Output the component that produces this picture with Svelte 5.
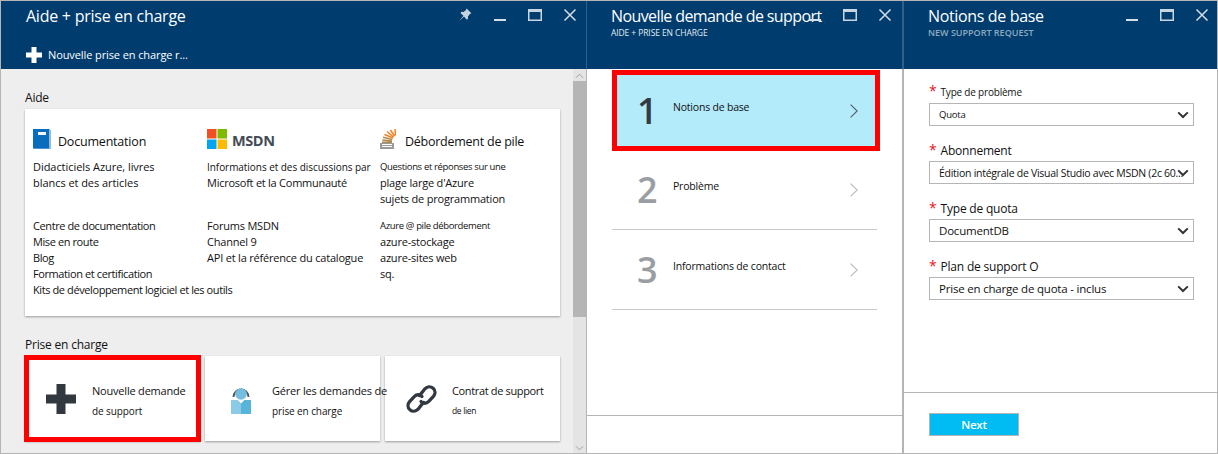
<script>
    const docLinks = ['Centre de documentation', 'Mise en route', 'Blog', 'Formation et certification', 'Kits de développement logiciel et les outils'];
    const msdnLinks = ['Forums MSDN', 'Channel 9', 'API et la référence du catalogue'];
    const soLinks = ['azure-stockage', 'azure-sites web', 'sq.'];
    const steps = [
        { n: 1, label: 'Notions de base', active: true },
        { n: 2, label: 'Problème' },
        { n: 3, label: 'Informations de contact' }
    ];
    const fields = [
        { label: 'Type de problème', value: 'Quota', small: true },
        { label: 'Abonnement', value: 'Édition intégrale de Visual Studio avec MSDN (2c 60...', tiny: true },
        { label: 'Type de quota', value: 'DocumentDB' },
        { label: 'Plan de support O', value: 'Prise en charge de quota - inclus' }
    ];
</script>

{#snippet controls(pin)}
    <div class="controls">
        {#if pin}
            <svg class="ctl pin" viewBox="0 0 14 14"><path d="M8.6 0.6 13.4 5.2 11.9 5.9 9.9 8.6 10 11 8.6 11.4 6 8.6 1.2 13 5.4 7.8 2.7 5.2 3.2 3.8 5.6 3.9 8 2 Z" fill="#c3d2de"/></svg>
        {/if}
        <svg class="ctl" viewBox="0 0 14 14"><rect x="1" y="11" width="12" height="2" fill="#d5dfe7"/></svg>
        <svg class="ctl" viewBox="0 0 14 14"><path d="M0 1H14V13H0ZM1.5 4V11.5H12.5V4Z" fill="#c9d6e0" fill-rule="evenodd"/></svg>
        <svg class="ctl" viewBox="0 0 14 14"><path d="M1.5 1.5 12.5 12.5M12.5 1.5 1.5 12.5" stroke="#d5dfe7" stroke-width="1.5" fill="none"/></svg>
    </div>
{/snippet}

{#snippet chevron()}
    <svg class="chev" viewBox="0 0 12 8"><path d="M1.2 1.4 6 6 10.8 1.4" fill="none" stroke="#333" stroke-width="2"/></svg>
{/snippet}

<div class="page">
    <section class="blade first">
        <header class="head">
            <div class="top">
                <h1 class="aide-title">Aide + prise en charge</h1>
                {@render controls(true)}
            </div>
            <div class="command">
                <svg class="cmd-plus" viewBox="0 0 16 16"><path d="M5.500 0H10.500V5.500H16V10.500H10.500V16H5.500V10.500H0V5.500H5.500Z" fill="#fff"/></svg>
                <span>Nouvelle prise en charge r...</span>
            </div>
        </header>
        <div class="scroller">
            <div class="content">
                <h2 class="aide">Aide</h2>
                <div class="help-card">
                    <div class="col">
                        <div class="col-head">
                            <svg class="ico" viewBox="0 0 18 20"><path d="M0 0H17V1H18V20H2L0 19Z" fill="#8fbce0"/><rect x="0" y="0" width="16" height="19.500" fill="#0a6cbd"/><rect x="5" y="3" width="8" height="3" fill="#fff" opacity=".95"/></svg>
                            <span class="doc-title">Documentation</span>
                        </div>
                        <div class="desc"><p>Didacticiels Azure, livres</p><p>blancs et des articles</p></div>
                        <div class="links tight">{#each docLinks as l}<p>{l}</p>{/each}</div>
                    </div>
                    <div class="col">
                        <div class="col-head">
                            <svg class="ico ms" viewBox="0 0 20 20"><rect width="9.500" height="9.500" fill="#f25022"/><rect x="10.500" width="9.500" height="9.500" fill="#7fba00"/><rect y="10.500" width="9.500" height="9.500" fill="#00a4ef"/><rect x="10.500" y="10.500" width="9.500" height="9.500" fill="#ffb900"/></svg>
                            <span class="msdn">MSDN</span>
                        </div>
                        <div class="desc"><p class="sm">Informations et des discussions par</p><p class="ms-line">Microsoft et la Communauté</p></div>
                        <div class="links">{#each msdnLinks as l}<p>{l}</p>{/each}</div>
                    </div>
                    <div class="col so-col">
                        <div class="col-head so-head">
                            <svg class="ico so" viewBox="0 0 16 20"><path d="M0 14V20H14V14Z" fill="#9a9a9a"/><path d="M2 15.500H12M2 17.500H12" stroke="#fff" stroke-width="1"/><path d="M2 13.300 12 13.300M2.300 11 12 12M3 8.300 12.300 10.500" stroke="#b08a50" stroke-width="1.500"/><path d="M4.500 5.500 13 9M7 2.500 13.500 8M10.500 1 14.500 7M15 0 15.500 6.500" stroke="#f48024" stroke-width="1.500"/></svg>
                            <span class="doc-title so-title">Débordement de pile</span>
                        </div>
                        <div class="desc"><p class="xs">Questions et réponses sur une</p><p>plage large d'Azure</p><p>sujets de programmation</p></div>
                        <div class="links"><p class="xs">Azure @ pile débordement</p>{#each soLinks as l}<p>{l}</p>{/each}</div>
                    </div>
                </div>
                <h2 class="prise">Prise en charge</h2>
                <div class="tiles">
                    <div class="tile marked">
                        <svg class="tile-plus" viewBox="0 0 30 30"><path d="M10.500 0H19.500V10.500H30V19.500H19.500V30H10.500V19.500H0V10.500H10.500Z" fill="#32383f"/></svg>
                        <div class="tile-text"><p>Nouvelle demande</p><p class="xs">de support</p></div>
                    </div>
                    <div class="tile person">
                        <svg class="tile-ico" viewBox="0 0 20 30"><path d="M2.500 13A7.500 7.500 0 1 1 17.500 13" fill="none" stroke="#555" stroke-width="1.800"/><circle cx="10" cy="10" r="5.800" fill="#74bfe0"/><path d="M0 16H6.500L10 19.500 13.500 16H20V30H0Z" fill="#59b4d9"/><path d="M0 16H6.500L10 19.500V30H0Z" fill="#8ccbe6"/></svg>
                        <div class="tile-text"><p>Gérer les demandes de</p><p class="xs">prise en charge</p></div>
                    </div>
                    <div class="tile">
                        <svg class="tile-ico link" viewBox="0 0 32 30"><g fill="none" stroke="#32383f" stroke-width="3.400" stroke-linecap="round"><path d="M14 11.500 19.500 4.500C22 2 25.500 1.800 28 4 30.500 6.300 30.500 9.800 28.300 12.300L23.500 17.500C21 20 17.500 20 15.500 17.500"/><path d="M18 18.500 12.500 25.500C10 28 6.500 28.200 4 26 1.500 23.700 1.500 20.200 3.700 17.700L8.500 12.500C11 10 14.500 10 16.500 12.500"/></g></svg>
                        <div class="tile-text contrat"><p>Contrat de support</p><p class="lien">de lien</p></div>
                    </div>
                </div>
            </div>
            <div class="scrollbar">
                <svg class="arrow" viewBox="0 0 10 6"><path d="M1 5 5 1 9 5" fill="none" stroke="#9a9a9a"/></svg>
                <div class="thumb"></div>
                <svg class="arrow down" viewBox="0 0 10 6"><path d="M1 1 5 5 9 1" fill="none" stroke="#9a9a9a"/></svg>
            </div>
        </div>
    </section>

    <section class="blade second">
        <header class="head">
            <div class="top tight">
                <div class="titles">
                    <h1 class="demande">Nouvelle demande de support</h1>
                    <div class="sub">AIDE + PRISE EN CHARGE</div>
                </div>
                {@render controls(false)}
            </div>
        </header>
        <div class="steps">
            {#each steps as s}
                <div class="step" class:active={s.active}>
                    <span class="num">{s.n}</span>
                    <span class="step-label">{s.label}</span>
                    <svg class="step-arrow" viewBox="0 0 8 14"><path d="M0.600 0.600 7.200 7 0.600 13.400" fill="none" stroke="currentColor" stroke-width="1.100"/></svg>
                </div>
            {/each}
        </div>
        <div class="blade-foot"></div>
    </section>

    <section class="blade third">
        <header class="head">
            <div class="top tight">
                <div class="titles">
                    <h1 class="base">Notions de base</h1>
                    <div class="sub muted">NEW SUPPORT REQUEST</div>
                </div>
                {@render controls(false)}
            </div>
        </header>
        <div class="form">
            {#each fields as f}
                <div class="field">
                    <div class="label" class:small={f.small}><span class="star">*</span>{f.label}</div>
                    <div class="select" class:small={f.small} class:tiny={f.tiny}>
                        <span class="val">{f.value}</span>
                        {@render chevron()}
                    </div>
                </div>
            {/each}
        </div>
        <div class="footer"><div class="next">Next</div></div>
    </section>
</div>

<style>
    :global(body) {
        margin: 0;
        background: #fff;
    }

    p, h1, h2 {
        margin: 0;
        font-weight: 400;
    }

    .page {
        width: 1218px;
        height: 454px;
        box-sizing: border-box;
        display: flex;
        border: 1px solid #b5b5b5;
        font-family: "Open Sans", "Noto Sans", sans-serif;
        font-size: 11px;
        letter-spacing: -0.2px;
        color: #111;
        overflow: hidden;
    }

    .blade {
        display: flex;
        flex-direction: column;
        flex: none;
        box-sizing: border-box;
    }

    .first { width: 585px; }
    .second { width: 316px; border-left: 1px solid #b5b5b5; }
    .third { width: 315px; border-left: 2px solid #b5b5b5; }

    .head {
        height: 68px;
        flex: none;
        background: #003c6e;
        color: #fff;
        box-sizing: border-box;
    }

    .second .head {
        margin-left: -1px;
        border-left: 1px solid #2f5f8a;
    }

    .third .head {
        margin-left: -2px;
        border-left: 2px solid #2f5f8a;
    }

    .top {
        display: flex;
        justify-content: space-between;
        padding: 4px 9px 0 25px;
        height: 36px;
        box-sizing: border-box;
    }

    .top.tight { padding-left: 24px; padding-right: 10px; }
    .third .top.tight { padding-left: 24px; padding-right: 8px; }

    h1 {
        font-size: 16px;
        line-height: 22px;
        white-space: nowrap;
        letter-spacing: -0.35px;
    }

    .aide-title { letter-spacing: -0.25px; }
    .demande { letter-spacing: -0.6px; }

    .titles {
        width: 130px;
    }

    .sub {
        font-size: 8.500px;
        line-height: 10px;
        letter-spacing: -0.1px;
        margin-top: 1px;
        white-space: nowrap;
        color: #e3ebf1;
    }

    .muted {
        font-size: 9px;
        color: #8eaabf;
        font-weight: 600;
        letter-spacing: 0;
    }

    .controls {
        display: flex;
        gap: 21px;
        align-items: flex-start;
        padding-top: 3px;
    }

    .ctl {
        width: 14px;
        height: 14px;
    }

    .command {
        display: flex;
        align-items: center;
        gap: 6px;
        padding: 10px 0 0 25px;
        font-size: 11px;
        line-height: 16px;
        letter-spacing: -0.1px;
    }

    .cmd-plus {
        width: 16px;
        height: 16px;
    }

    .scroller {
        flex: 1;
        display: flex;
        background: #eee;
        min-height: 0;
    }

    .content {
        width: 535px;
        margin-left: 24px;
    }

    .aide {
        font-size: 12px;
        line-height: 16px;
        margin-top: 21px;
        margin-bottom: 3px;
    }

    .help-card {
        height: 207px;
        background: #fff;
        box-shadow: 0 1px 2px rgba(0, 0, 0, 0.35);
        display: grid;
        grid-template-columns: 174px 173px 1fr;
        padding: 20px 0 0 8px;
        box-sizing: border-box;
    }

    .col-head {
        display: flex;
        align-items: center;
        height: 20px;
        gap: 7px;
        margin-bottom: 10px;
    }

    .so-head { gap: 9px; }

    .ico {
        width: 18px;
        height: 20px;
        flex: none;
    }

    .ms { width: 20px; height: 20px; }
    .so { width: 16px; height: 20px; }

    .doc-title {
        font-size: 12.500px;
        letter-spacing: -0.2px;
        margin-top: 5px;
    }

    .so-title {
        letter-spacing: -0.25px;
    }

    .msdn {
        font-size: 14.500px;
        font-weight: 700;
        color: #444b55;
        margin-left: -2px;
        margin-top: 3px;
        letter-spacing: -0.4px;
    }

    .desc {
        height: 59px;
        line-height: 16px;
        white-space: nowrap;
        letter-spacing: -0.05px;
    }

    .so-col .desc { letter-spacing: -0.2px; }

    .ms-line { letter-spacing: -0.25px; }

    .links {
        line-height: 16px;
        white-space: nowrap;
    }

    .links.tight {
        letter-spacing: -0.4px;
    }

    .xs {
        font-size: 9.500px;
        letter-spacing: -0.35px;
    }

    .so-col .desc .xs { letter-spacing: -0.35px; }

    .sm {
        font-size: 10px;
        letter-spacing: -0.05px;
    }

    .prise {
        font-size: 12px;
        line-height: 16px;
        margin-top: 21px;
        margin-bottom: 3px;
    }

    .tiles {
        display: grid;
        grid-template-columns: repeat(3, 175px);
        column-gap: 5px;
    }

    .tile {
        height: 85px;
        background: #fff;
        box-shadow: 0 1px 2px rgba(0, 0, 0, 0.35);
        display: flex;
        align-items: center;
        box-sizing: border-box;
        padding-left: 24px;
    }

    .tile.marked {
        outline: 5px solid #f00;
        outline-offset: -4px;
        padding-left: 21px;
    }

    .tile-plus {
        width: 30px;
        height: 30px;
        flex: none;
        margin-right: 16px;
    }

    .tile-ico {
        width: 20px;
        height: 30px;
        flex: none;
        margin-right: 21px;
    }

    .person { padding-left: 26px; }

    .tile-ico.link {
        width: 31px;
        margin-left: -3px;
        margin-right: 15px;
    }

    .tile-text {
        white-space: nowrap;
        line-height: 20px;
        padding-top: 5px;
        position: relative;
        z-index: 1;
    }

    .contrat { letter-spacing: -0.35px; }

    .tile-text .xs {
        font-size: 10px;
        letter-spacing: -0.1px;
    }

    .lien {
        font-size: 8.500px;
    }

    .scrollbar {
        width: 13px;
        margin-left: 13px;
        background: #e4e4e4;
        display: flex;
        flex-direction: column;
        align-items: center;
        justify-content: flex-start;
    }

    .arrow {
        width: 9px;
        height: 6px;
        margin: 4px 0 2px;
        flex: none;
    }

    .arrow.down {
        margin: auto 0 2px;
    }

    .thumb {
        width: 13px;
        height: 236px;
        background: #b5b5b5;
        flex: none;
    }

    .steps {
        flex: 1;
        padding: 1px 25px 0 25px;
    }

    .step {
        height: 79px;
        display: flex;
        align-items: center;
        border-bottom: 1px solid #c8c8c8;
        padding-left: 25px;
        position: relative;
    }

    .step.active {
        background: #b3ebfb;
        outline: 5px solid #f00;
        outline-offset: -5px;
        border-bottom: 0;
        height: 81px;
        width: 268px;
        box-sizing: border-box;
        margin-bottom: -1px;
    }

    .num {
        font-size: 36px;
        width: 36px;
        flex: none;
        color: #9a9ea2;
        font-weight: 600;
        line-height: 40px;
    }

    .active .num {
        color: #333a42;
    }

    .step-label {
        flex: 1;
        margin-top: -8px;
        font-size: 10.500px;
    }

    .step-arrow {
        width: 8px;
        height: 14px;
        margin-right: 19px;
        color: #b9b9b9;
        flex: none;
    }

    .active .step-arrow {
        color: #555d66;
        margin-right: 22px;
    }

    .blade-foot {
        height: 37px;
        border-top: 1px solid #b5b5b5;
        flex: none;
    }

    .form {
        flex: 1;
        padding: 14px 23px 0 25px;
    }

    .field {
        height: 58px;
    }

    .label {
        font-size: 12px;
        line-height: 18px;
        height: 20px;
        white-space: nowrap;
    }

    .label.small {
        font-size: 10px;
        line-height: 16px;
    }

    .star {
        color: #e81123;
        font-size: 14px;
        margin-right: 4px;
    }

    .select {
        height: 23px;
        box-sizing: border-box;
        border: 1px solid #b5b5b5;
        display: flex;
        align-items: center;
        padding: 0 4px 0 9px;
        font-size: 11.500px;
    }

    .select.small { font-size: 9.500px; }
    .select.tiny { font-size: 10.500px; letter-spacing: -0.27px; }

    .val {
        flex: 1;
        min-width: 0;
        white-space: nowrap;
    }

    .chev {
        width: 12px;
        height: 8px;
        flex: none;
    }

    .footer {
        height: 61px;
        flex: none;
        border-top: 1px solid #b5b5b5;
        padding: 20px 0 0 25px;
        box-sizing: border-box;
    }

    .next {
        width: 90px;
        height: 23px;
        box-sizing: border-box;
        border: 1px solid #b5b5b5;
        background: #00bcf2;
        color: #fff;
        font-weight: 600;
        font-size: 11.500px;
        line-height: 21px;
        text-align: center;
    }
</style>
